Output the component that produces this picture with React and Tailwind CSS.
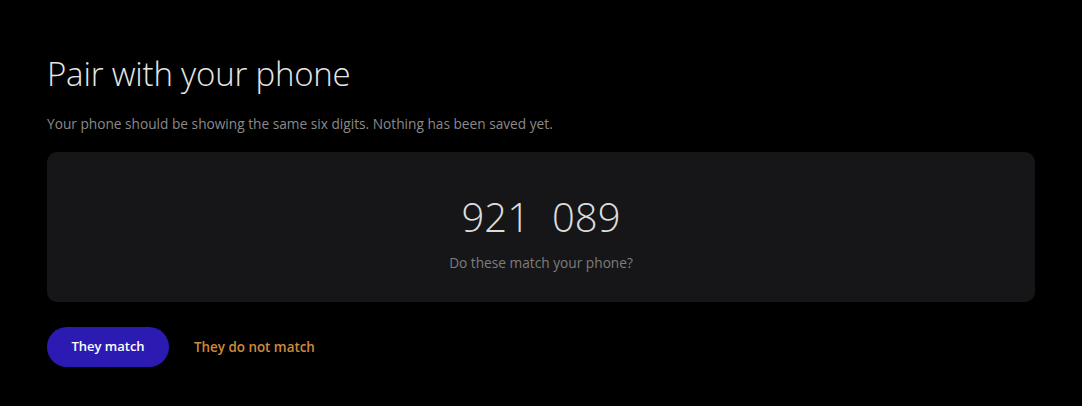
import React from "react";

function App() {
  return (
    <div className="min-h-screen w-full bg-black text-white" style={{ fontFamily: '"Open Sans", "Noto Sans", sans-serif' }}>
      <div className="px-[47px] pt-[52px]">
        {/* HEADER */}
        <h1 className="text-[33px] font-light leading-[44px] tracking-[-0.2px] text-[#e6e6e6]">Pair with your phone</h1>
        <p className="mt-[19px] text-[13.7px] leading-[18px] text-[#8a8a8a]">
          Your phone should be showing the same six digits. Nothing has been saved yet.
        </p>

        {/* CODE CARD */}
        <div className="mt-[19px] flex h-[150px] flex-col items-center justify-center rounded-[10px] bg-[#161618]">
          <div className="mt-[10px] flex gap-[22px] text-[40px] font-light leading-[48px] text-[#dcdcdc]">
            <span>921</span>
            <span>089</span>
          </div>
          <p className="mt-[13px] text-[13.7px] leading-[18px] text-[#7d7d7d]">Do these match your phone?</p>
        </div>

        {/* ACTIONS */}
        <div className="mt-[25px] flex items-center gap-[25px]">
          <button className="h-[40px] w-[122px] rounded-full bg-[#2c1bb3] text-[13px] font-semibold text-white">
            They match
          </button>
          <button className="text-[13.4px] font-semibold text-[#d08a3a]">They do not match</button>
        </div>
      </div>
    </div>
  );
}

export default App;
